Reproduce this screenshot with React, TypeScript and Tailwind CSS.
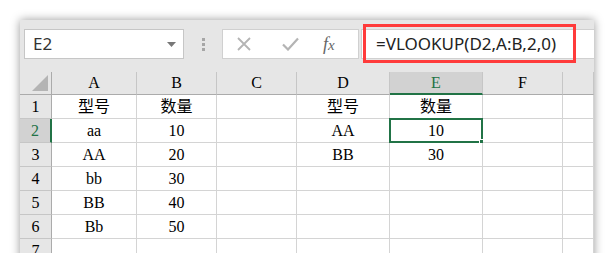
import React from 'react';

const cols = ['A', 'B', 'C', 'D', 'E', 'F', ''];

const rows: string[][] = [
  ['型号', '数量', '', '型号', '数量', '', ''],
  ['aa', '10', '', 'AA', '10', '', ''],
  ['AA', '20', '', 'BB', '30', '', ''],
  ['bb', '30', '', '', '', '', ''],
  ['BB', '40', '', '', '', '', ''],
  ['Bb', '50', '', '', '', '', ''],
  ['', '', '', '', '', '', ''],
];

const serif = "font-['Liberation_Serif','Noto_Sans_CJK_SC',serif]";

export default function App() {
  return (
    <div className="w-[614px] h-[253px] bg-white overflow-hidden pt-[20px] pl-[20px]">
      <div className="relative w-[574px] h-[260px] bg-[#e6e6e6] shadow-[0_0_9px_rgba(0,0,0,0.4)]">
        {/* Formula bar */}
        <div className="flex items-center h-[52px] pl-[4px] pb-[4px]">
          <div className="flex items-center justify-between w-[160px] h-[30px] bg-white border border-[#c6c6c6] pl-[8px] pr-[7px]">
            <span className="text-[17px] text-[#333] font-['Noto_Sans',sans-serif]">E2</span>
            <svg width="9" height="5" viewBox="0 0 9 5">
              <path d="M0 0 L9 0 L4.5 5 Z" fill="#777" />
            </svg>
          </div>
          <div className="flex flex-col gap-[2px] ml-[18px] mr-[17px]">
            <div className="w-[3px] h-[3px] bg-[#a6a6a6]" />
            <div className="w-[3px] h-[3px] bg-[#a6a6a6]" />
            <div className="w-[3px] h-[3px] bg-[#a6a6a6]" />
          </div>
          <div className="flex items-center w-[137px] h-[30px] bg-white border border-[#d0d0d0]">
            <svg className="ml-[14px]" width="14" height="14" viewBox="0 0 14 14">
              <path d="M1 1 L13 13 M13 1 L1 13" stroke="#b4b4b4" strokeWidth="1.8" fill="none" />
            </svg>
            <svg className="ml-[31px]" width="17" height="14" viewBox="0 0 17 14">
              <path d="M1 7.5 L6 12.5 L16 1.5" stroke="#b4b4b4" strokeWidth="2.2" fill="none" />
            </svg>
            <span className="ml-[24px] text-[18px] italic text-[#666] font-['Liberation_Serif',serif] leading-none">
              f<span className="text-[15px]">x</span>
            </span>
          </div>
          <div className="flex items-center flex-1 h-[30px] ml-[2px] bg-white border-y border-l border-[#d0d0d0] pl-[14px]">
            <span className="text-[17px] text-[#222] font-['Noto_Sans',sans-serif]">=VLOOKUP(D2,A:B,2,0)</span>
          </div>
        </div>

        {/* Red highlight */}
        <div className="absolute left-[343px] top-[4px] w-[213px] h-[39px] border-[3px] border-[#ff3b3b]" />

        {/* Grid */}
        <div className={`grid grid-cols-[32px_85px_80px_80px_93px_93px_80px_1fr] ${serif}`}>
          <div className="relative h-[23px] border-b border-r border-[#ababab]">
            <svg className="absolute right-[3px] bottom-[3px]" width="16" height="16" viewBox="0 0 16 16">
              <path d="M16 0 L16 16 L0 16 Z" fill="#b4b4b4" />
            </svg>
          </div>
          {cols.map((c, i) =>
            c === 'E' ? (
              <div
                key={i}
                className="h-[23px] flex items-center justify-center bg-[#d2d2d2] border-r border-[#c6c6c6] border-b-2 border-b-[#217346] text-[16px] text-[#217346]"
              >
                {c}
              </div>
            ) : (
              <div
                key={i}
                className="h-[23px] flex items-center justify-center border-r border-[#c6c6c6] border-b border-b-[#ababab] text-[16px] text-black"
              >
                {c}
              </div>
            )
          )}
          {rows.map((r, ri) => (
            <React.Fragment key={ri}>
              {ri === 1 ? (
                <div className="h-[24px] flex items-center justify-center bg-[#d2d2d2] border-b border-[#c6c6c6] border-r-2 border-r-[#217346] text-[16px] text-[#217346]">
                  {ri + 1}
                </div>
              ) : (
                <div className="h-[24px] flex items-center justify-center border-b border-[#c6c6c6] border-r border-r-[#ababab] text-[16px] text-black">
                  {ri + 1}
                </div>
              )}
              {r.map((v, ci) => (
                <div
                  key={ci}
                  className="relative h-[24px] flex items-center justify-center bg-white border-b border-r border-[#d4d4d4] text-[16px] text-black"
                >
                  {v}
                  {ri === 1 && ci === 4 && (
                    <>
                      <div className="absolute -left-[1px] -top-[1px] -right-[1px] -bottom-[1px] border-2 border-[#217346]" />
                      <div className="absolute -right-[3px] -bottom-[3px] w-[6px] h-[6px] bg-[#217346] border border-white" />
                    </>
                  )}
                </div>
              ))}
            </React.Fragment>
          ))}
        </div>
      </div>
    </div>
  );
}
